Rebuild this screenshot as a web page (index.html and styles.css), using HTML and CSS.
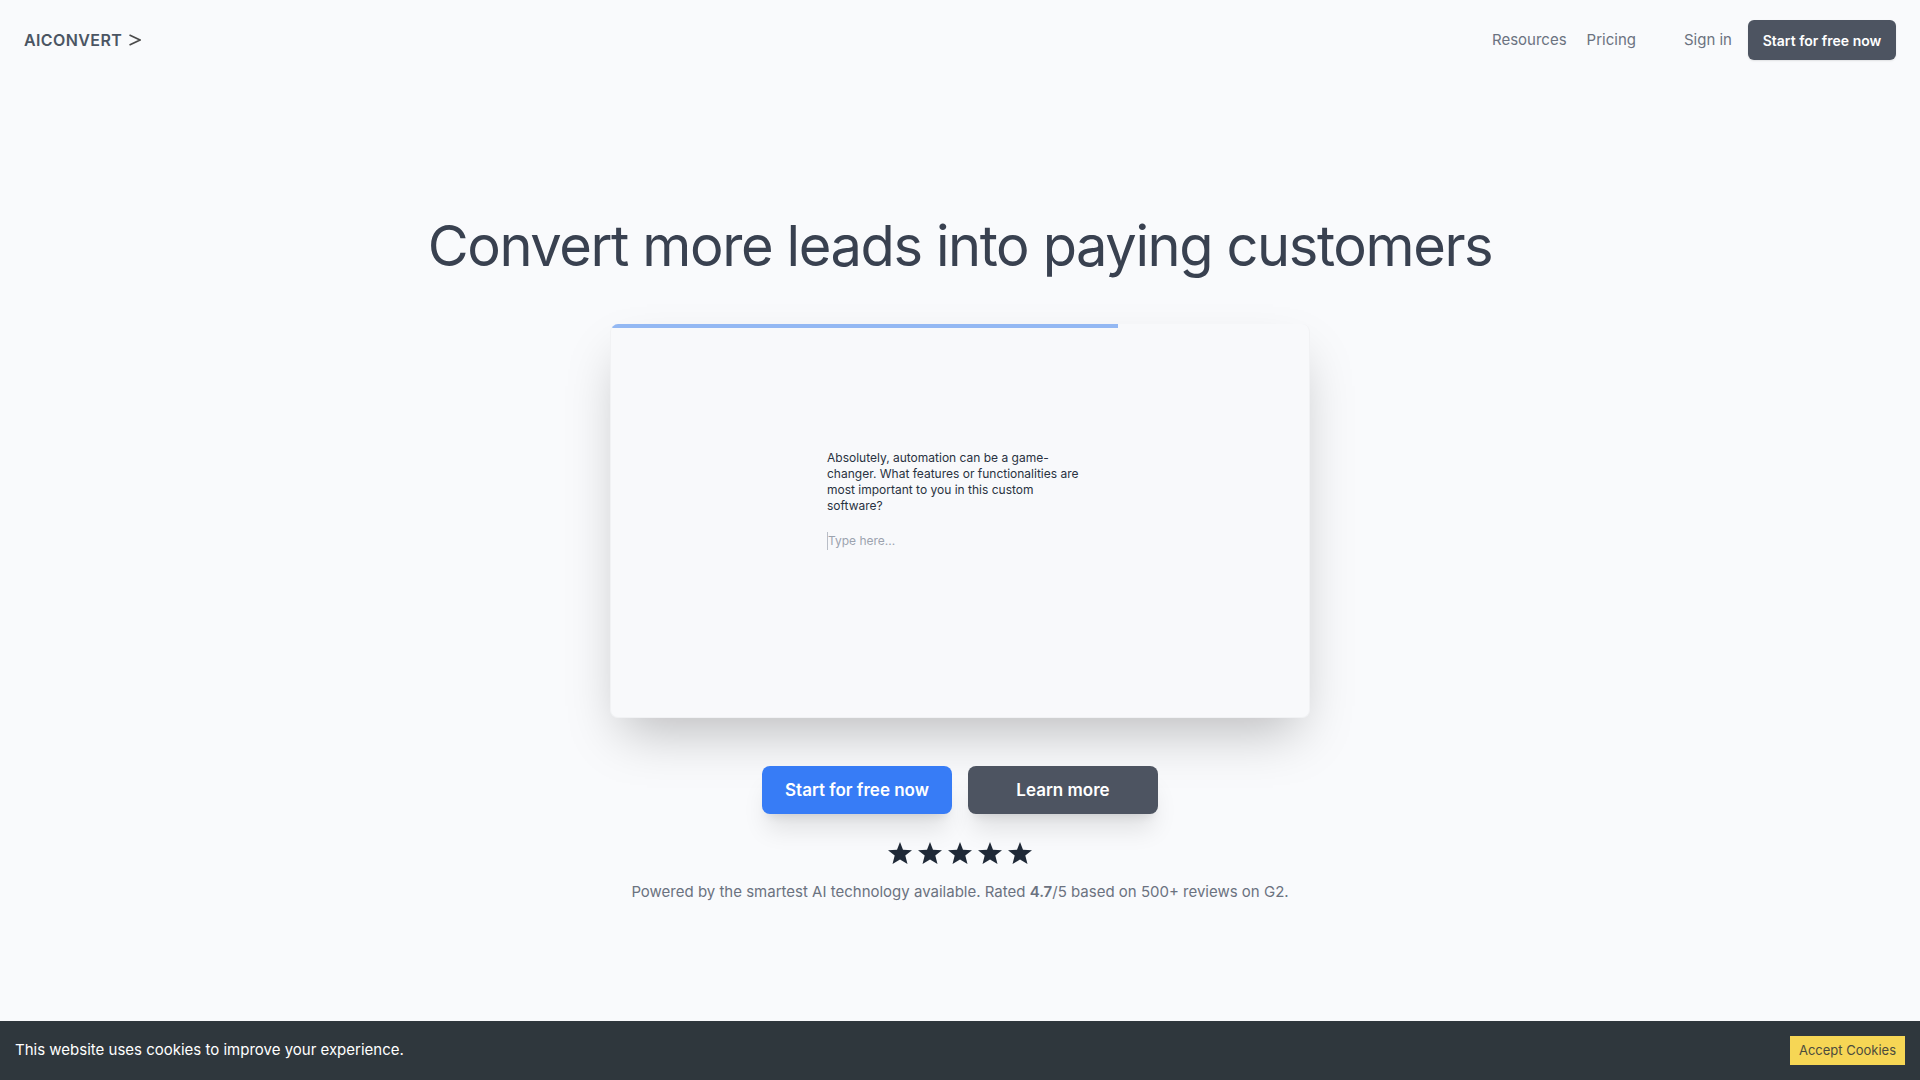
FILE: index.html
```html
<!DOCTYPE html>
<html lang="en">
<head>
<meta charset="utf-8">
<meta name="viewport" content="width=device-width, initial-scale=1">
<title>AIConvert</title>
<link rel="stylesheet" href="styles.css">
</head>
<body>
<svg class="sprite" aria-hidden="true">
  <symbol id="star" viewBox="0 0 24 22"><path d="M12 0 L15 7.700 L24 8.200 L17.300 13.600 L19.500 22 L12 17.600 L4.500 22 L6.700 13.600 L0 8.200 L9 7.700 Z"/></symbol>
</svg>
<header class="header">
  <a class="logo" href="#"><span>AICONVERT</span>
    <svg class="logo-mark" viewBox="0 0 12 12" aria-hidden="true"><path d="M0.500 1 L11 6 L0.500 11"/></svg>
  </a>
  <nav class="nav">
    <a href="#">Resources</a>
    <a href="#">Pricing</a>
    <a class="sign-in" href="#">Sign in</a>
    <button class="button button-small" type="button">Start for free now</button>
  </nav>
</header>
<main class="hero">
  <h1>Convert more leads into paying customers</h1>
  <section class="demo">
    <div class="progress"><div class="progress-value" style="width:72.6%"></div></div>
    <form class="chat">
      <label for="answer">Absolutely, automation can be a game-changer. What features or functionalities are most important to you in this custom software?</label>
      <input id="answer" type="text" placeholder="Type here...">
    </form>
  </section>
  <div class="actions">
    <button class="button button-large button-primary" type="button">Start for free now</button>
    <button class="button button-large" type="button">Learn more</button>
  </div>
  <div class="stars">
    <svg><use href="#star"/></svg>
    <svg><use href="#star"/></svg>
    <svg><use href="#star"/></svg>
    <svg><use href="#star"/></svg>
    <svg><use href="#star"/></svg>
  </div>
  <p class="rating">Powered by the smartest AI technology available. Rated <strong>4.7</strong>/5 based on 500+ reviews on G2.</p>
</main>
<footer class="cookies">
  <p>This website uses cookies to improve your experience.</p>
  <button type="button">Accept Cookies</button>
</footer>
</body>
</html>
```
FILE: styles.css
```css
* {
  box-sizing: border-box;
}

body {
  display: flex;
  flex-direction: column;
  min-height: 100vh;
  margin: 0;
  background: #f9fafc;
  color: #6b7280;
  font: 15px/24px Inter, "Liberation Sans", sans-serif;
}

h1,
p {
  margin: 0;
}

a {
  color: inherit;
  text-decoration: none;
}

.sprite {
  display: none;
}

.header {
  display: flex;
  align-items: center;
  justify-content: space-between;
  padding: 20px 24px;
}

.logo {
  display: flex;
  align-items: center;
  gap: 7px;
  color: #4b5563;
  font-size: 16px;
  font-weight: 600;
  letter-spacing: 0.025em;
}

.logo-mark {
  width: 12px;
  height: 12px;
  fill: none;
  stroke: #4a4a4a;
  stroke-width: 1.600;
}

.nav {
  display: flex;
  align-items: center;
  gap: 20px;
}

.sign-in {
  margin-left: 28px;
}

.button {
  border: 0;
  border-radius: 8px;
  background: #4d5461;
  color: #fff;
  font-family: inherit;
  font-weight: 600;
}

.button-small {
  width: 148px;
  height: 40px;
  margin-left: -4px;
  padding: 0;
  border-radius: 6px;
  font-size: 14px;
  box-shadow: 0 1px 2px rgba(0, 0, 0, 0.1);
}

.hero {
  display: flex;
  flex: 1;
  flex-direction: column;
  align-items: center;
  padding: 118px 24px 24px;
}

h1 {
  color: #394150;
  font-size: 56px;
  font-weight: 400;
  line-height: 96px;
  letter-spacing: -0.025em;
  text-align: center;
}

.demo {
  display: flex;
  flex-direction: column;
  width: 100%;
  max-width: 700px;
  min-height: 394px;
  margin-top: 30px;
  overflow: hidden;
  border: 1px solid #f1f2f4;
  border-top-width: 0;
  border-radius: 8px;
  background: #f8f9fb;
  box-shadow: 0 25px 50px -12px rgba(0, 0, 0, 0.25);
}

.progress-value {
  height: 4px;
  background: #93b8f3;
}

.chat {
  display: flex;
  flex: 1;
  flex-direction: column;
  justify-content: center;
  gap: 18px;
  width: 266px;
  margin: 0 auto;
  padding-bottom: 46px;
  color: #293241;
  font-size: 12px;
  line-height: 16px;
}

.chat label {
  max-width: 260px;
}

.chat input {
  width: 100%;
  height: 18px;
  padding: 0;
  border: 0;
  border-left: 1px solid #b9bec7;
  background: none;
  color: inherit;
  font: inherit;
}

.chat input::placeholder {
  color: #9ca3af;
}

.actions {
  display: flex;
  gap: 16px;
  margin-top: 48px;
}

.button-large {
  width: 190px;
  height: 48px;
  padding: 0;
  font-size: 17px;
  box-shadow: 0 20px 25px -5px rgba(0, 0, 0, 0.1), 0 8px 10px -6px rgba(0, 0, 0, 0.1);
}

.button-primary {
  background: #377cf6;
}

.stars {
  display: flex;
  gap: 6px;
  margin-top: 28px;
}

.stars svg {
  width: 24px;
  height: 22px;
  fill: #1f2937;
}

.rating {
  margin-top: 16px;
}

.rating strong {
  font-weight: 600;
}

.cookies {
  display: flex;
  align-items: center;
  justify-content: space-between;
  padding: 15px;
  background: #2f373d;
  color: #fff;
}

.cookies p {
  padding-bottom: 2px;
}

.cookies button {
  width: 115px;
  padding: 6px 0;
  border: 0;
  background: #f6d655;
  color: #4b4b3d;
  font: 13px/17px Inter, "Liberation Sans", sans-serif;
}
```
